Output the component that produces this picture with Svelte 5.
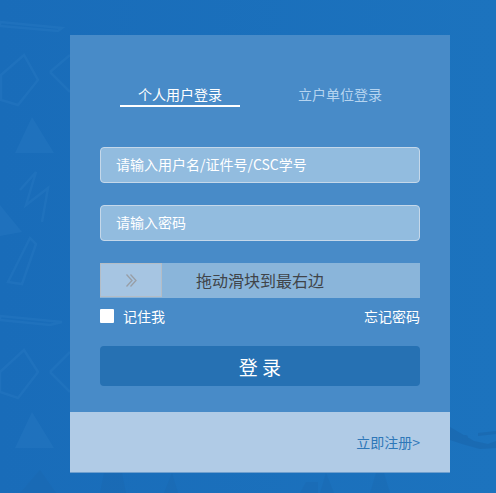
<script lang="ts">
  let remember = $state(false)
  let tab = $state(0)
  const tabs = ['个人用户登录', '立户单位登录']
</script>

<div class="page">
  <svg class="backdrop" viewBox="0 0 496 493" aria-hidden="true">
    <g class="marks" fill="none" stroke="#2f80c8" stroke-width="2.5">
      <path d="M1 75 L24 55 L38 80 L18 105 L1 100 Z" />
      <path d="M0 372 L24 350 L38 372 L18 398 L0 392 Z" />
      <path d="M50 72 L70 55 M50 72 L70 92" />
      <path d="M50 372 L70 352 M50 372 L70 392" />
      <path d="M20 190 L36 172 L26 205 L48 188 L42 222" />
      <path d="M8 282 L30 238 L36 244 L22 284 Z" />
      <path d="M0 22 L62 28 L58 31 L0 26 Z" />
      <path d="M0 316 L62 322 L50 325 L0 320 Z" />
    </g>
    <g class="marks" fill="#2f80c8">
      <path d="M32 117 L15 153 L54 153 Z" />
      <path d="M32 412 L15 448 L54 448 Z" />
      <path d="M0 205 L22 232 L0 236 Z" />
    </g>
    <g class="plane" fill="#1a66ac">
      <path d="M450 427 L474 441 L488 444 L496 441 L496 448 L480 449 L462 444 L450 440 Z" />
      <circle cx="465" cy="438" r="3" />
      <path d="M478 433 L496 431 L496 434 L478 436 Z" />
    </g>
    <g class="skyline" fill="#1a66ac">
      <path d="M20 493 L40 470 L56 493 Z" />
      <path d="M104 473 H122 L126 493 H100 Z" />
      <path d="M172 473 L178 493 H164 Z" />
      <path d="M300 493 L306 482 H318 V493 Z" />
      <path d="M326 473 L334 493 H320 Z" />
      <path d="M376 473 H384 L390 493 H370 Z" />
    </g>
  </svg>

  <main class="card">
    <form class="body" onsubmit={(e) => e.preventDefault()}>
      <div class="tabs">
        {#each tabs as label, i}
          <button type="button" class="tab" class:active={tab === i} onclick={() => (tab = i)}>{label}</button>
        {/each}
      </div>

      <input class="field first" type="text" placeholder="请输入用户名/证件号/CSC学号" />
      <input class="field" type="password" placeholder="请输入密码" />

      <div class="slider">
        <span class="handle">
          <svg viewBox="0 0 11 13" width="11" height="13" aria-hidden="true">
            <path d="M0.5 0.5 L6 6.5 L0.5 12.5 M4.5 0.5 L10 6.5 L4.5 12.5" fill="none" stroke="#989ea6" stroke-width="1.3" />
          </svg>
        </span>
        <span class="hint">拖动滑块到最右边</span>
      </div>

      <div class="options">
        <label class="remember">
          <input type="checkbox" bind:checked={remember} />
          <span>记住我</span>
        </label>
        <a href="#forgot">忘记密码</a>
      </div>

      <button class="submit" type="submit">登 录</button>
    </form>

    <footer class="foot">
      <a href="#register">立即注册&gt;</a>
    </footer>
  </main>
</div>

<style>
  :global(body) {
    margin: 0;
  }
  .page {
    position: relative;
    height: 493px;
    box-sizing: border-box;
    padding: 35px 46px 0 70px;
    overflow: hidden;
    background: linear-gradient(90deg, #196cb9, #1c73be);
    font-family: 'Noto Sans CJK SC', 'Liberation Sans', sans-serif;
    font-size: 14px;
  }
  .backdrop {
    position: absolute;
    inset: 0;
    width: 100%;
    height: 100%;
  }
  .marks {
    opacity: 0.28;
  }
  .plane {
    opacity: 0.6;
  }
  .skyline {
    opacity: 0.3;
  }
  .card {
    position: relative;
    width: 380px;
    height: 438px;
    display: flex;
    flex-direction: column;
    background: #488bc8;
  }
  .body {
    flex: 1;
    display: flex;
    flex-direction: column;
    padding: 45px 30px 0;
  }
  .tabs {
    display: flex;
    justify-content: center;
    gap: 40px;
    margin-bottom: 40px;
  }
  .tab {
    width: 120px;
    height: 27px;
    padding: 2px 0 0;
    border: 0;
    border-bottom: 2px solid transparent;
    background: none;
    color: #b5d4f0;
    font: inherit;
    line-height: 20px;
    cursor: pointer;
  }
  .tab.active {
    color: #fff;
    border-bottom-color: #fff;
  }
  .field {
    box-sizing: border-box;
    height: 36px;
    margin-top: 22px;
    padding: 0 15px 2px;
    border: 1px solid #c5d8ea;
    border-radius: 4px;
    outline: none;
    background: #92bcdf;
    color: #fff;
    font: inherit;
  }
  .field.first {
    margin-top: 0;
  }
  .field::placeholder {
    color: #fff;
    opacity: 1;
  }
  .slider {
    position: relative;
    height: 35px;
    margin-top: 22px;
    background: #8ab5da;
    text-align: center;
  }
  .handle {
    position: absolute;
    left: 0;
    top: 0;
    box-sizing: border-box;
    width: 62px;
    height: 34px;
    display: flex;
    align-items: center;
    justify-content: center;
    border: 1px solid #b4bdc6;
    background: #a6c5e2;
  }
  .hint {
    font-size: 16px;
    line-height: 34px;
    color: #404449;
  }
  .options {
    display: flex;
    align-items: center;
    justify-content: space-between;
    height: 20px;
    margin-top: 8px;
    color: #fff;
  }
  .options a {
    color: #fff;
    text-decoration: none;
  }
  .remember {
    display: flex;
    align-items: center;
    gap: 10px;
  }
  .remember input {
    appearance: none;
    width: 14px;
    height: 14px;
    margin: 0;
    border-radius: 1px;
    background: #fff;
  }
  .remember span {
    margin-left: -1px;
  }
  .submit {
    height: 40px;
    margin-top: 20px;
    border: 0;
    border-radius: 4px;
    background: #2671b3;
    color: #fff;
    font: inherit;
    font-size: 19px;
    cursor: pointer;
  }
  .foot {
    box-sizing: border-box;
    height: 61px;
    display: flex;
    align-items: center;
    justify-content: flex-end;
    padding: 0 30px 0 0;
    border-bottom: 1px solid #6f9fce;
    background: #b0cbe6;
  }
  .foot a {
    color: #2e77b8;
    text-decoration: none;
  }
</style>
